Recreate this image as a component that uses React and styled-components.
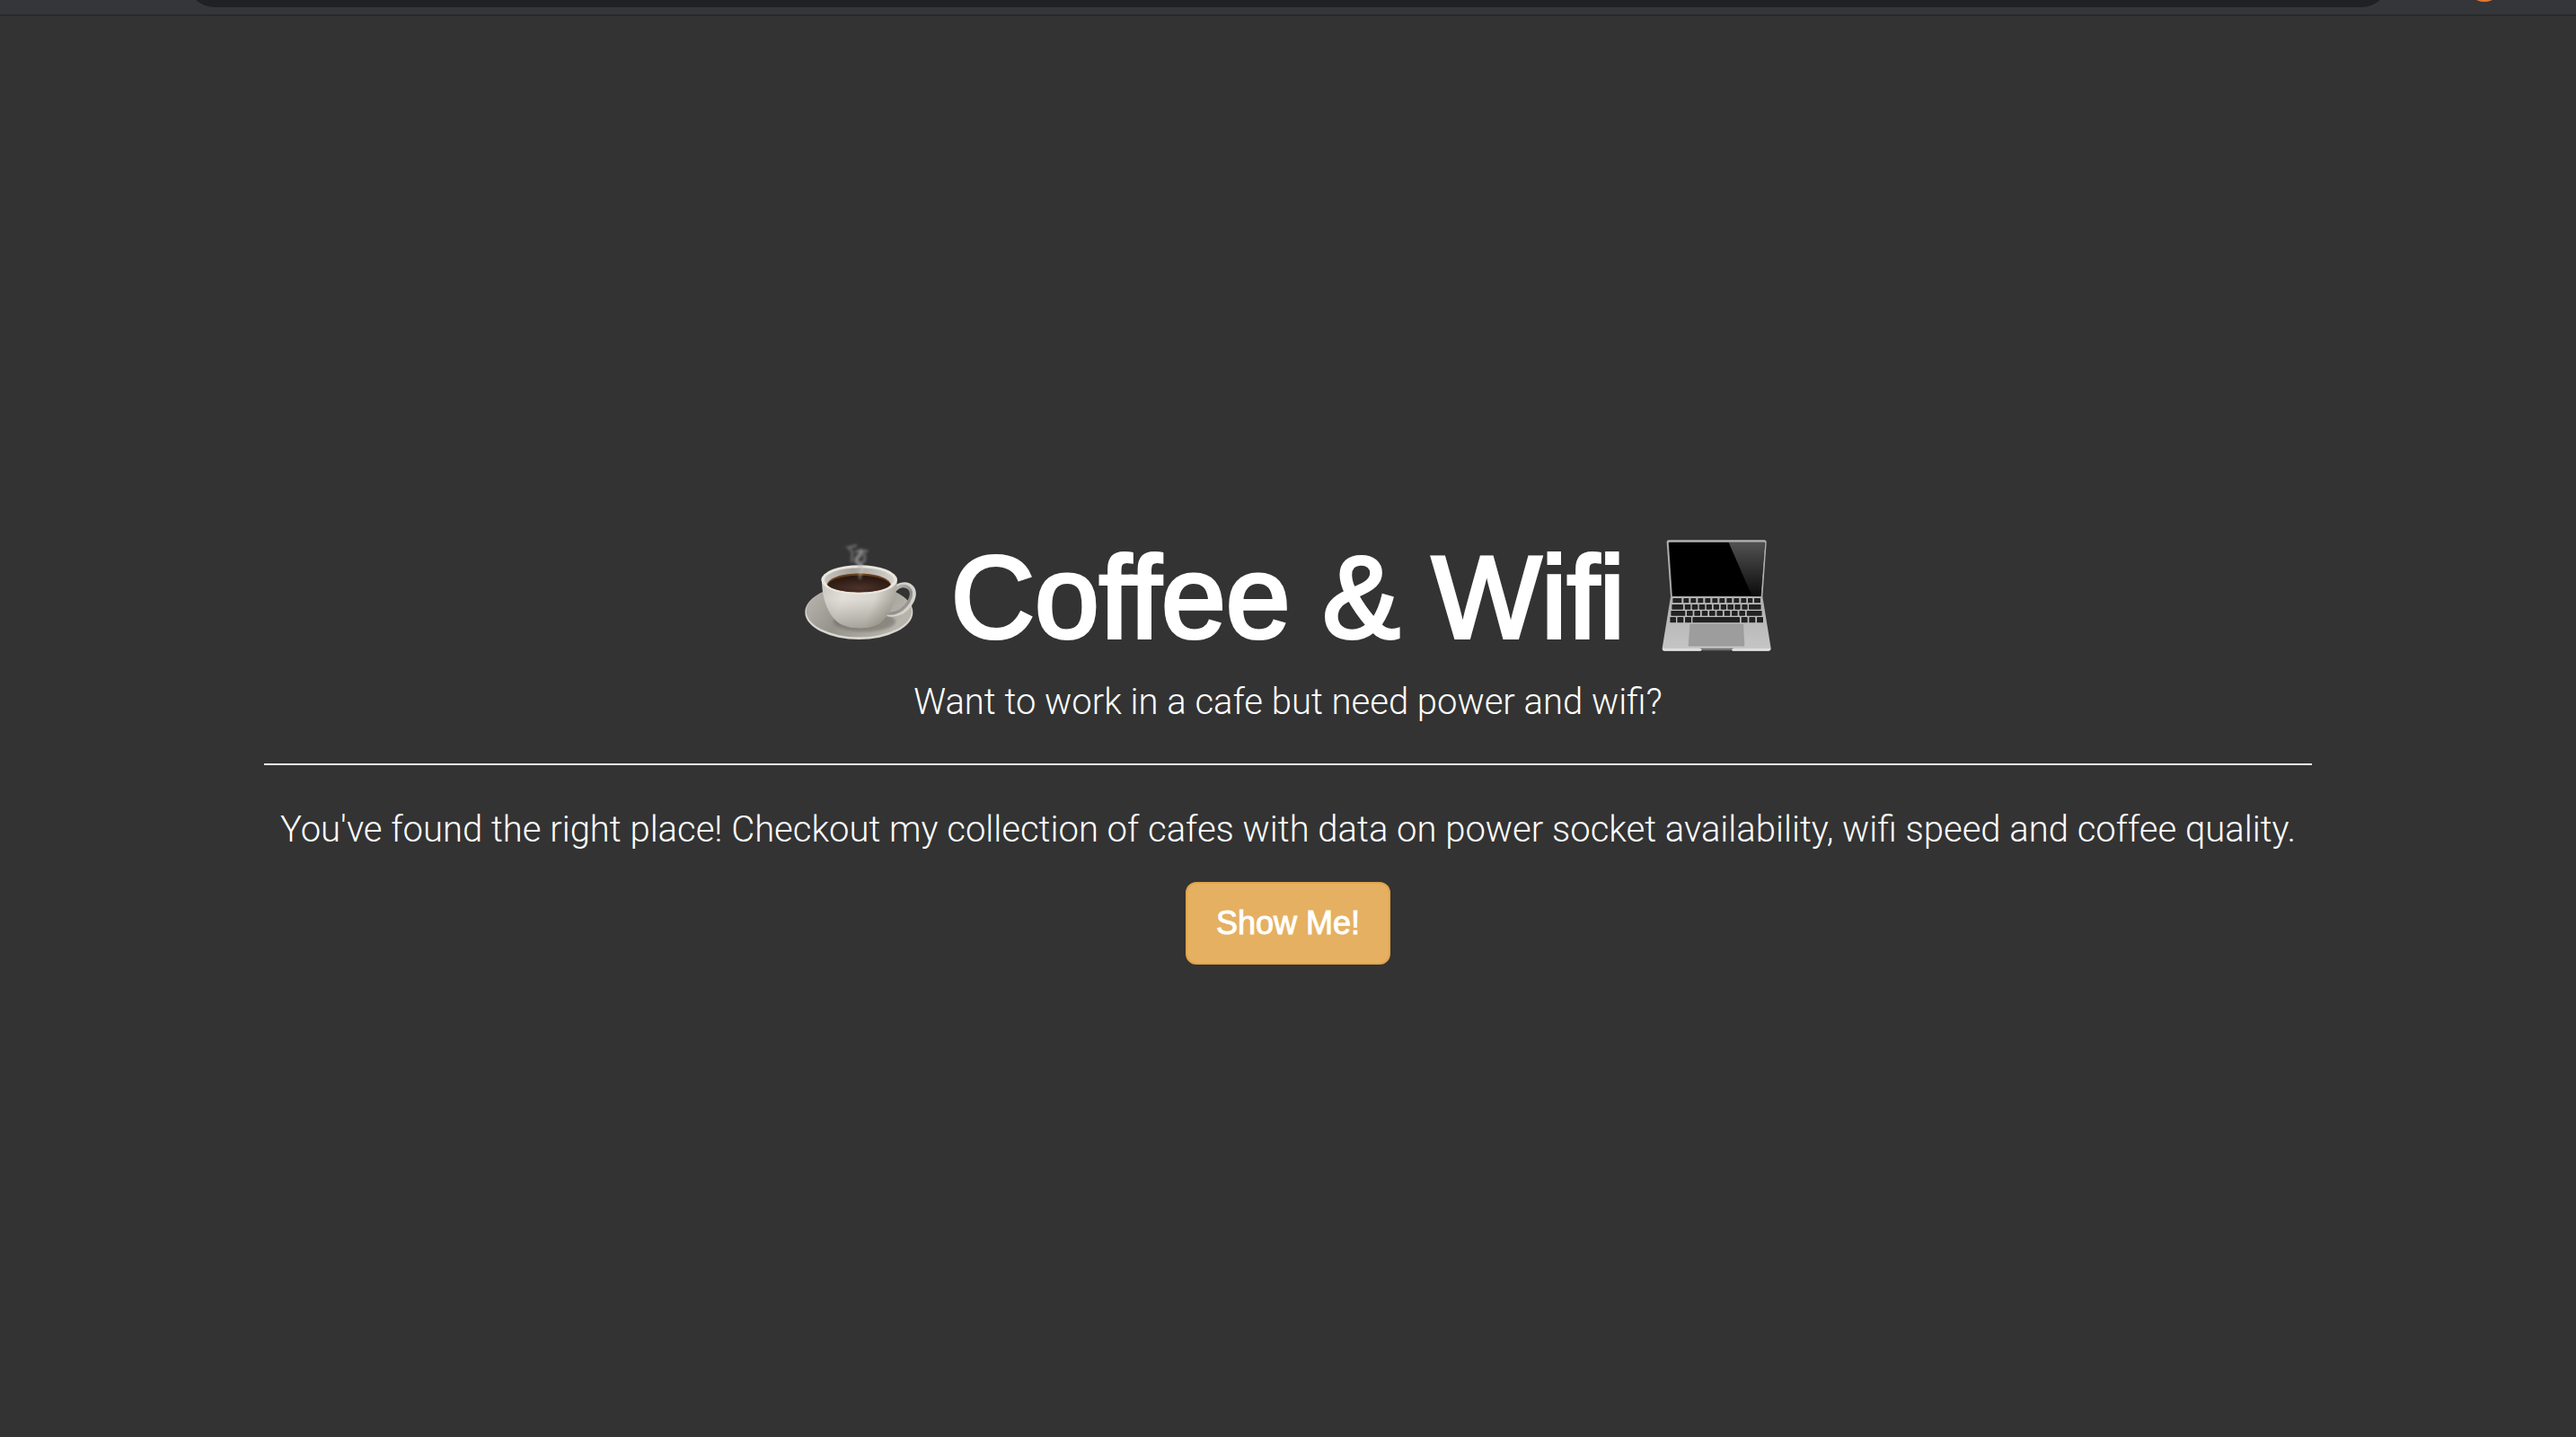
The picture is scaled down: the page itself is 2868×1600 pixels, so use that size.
import React from "react";
import styled, { createGlobalStyle } from "styled-components";

const GlobalStyle = createGlobalStyle`
  *, *::before, *::after { box-sizing: border-box; }
  body {
    margin: 0;
    background: #333333;
    color: #ffffff;
    font-family: "Liberation Sans", Arial, sans-serif;
  }
`;

const Page = styled.div`
  display: flex;
  flex-direction: column;
  min-height: 100vh;
`;

const Toolbar = styled.header`
  display: flex;
  align-items: flex-end;
  gap: 88px;
  height: 18px;
  padding: 0 82px 0 210px;
  overflow: hidden;
  background: #35363a;
  border-bottom: 2px solid #292929;
`;

const AddressBar = styled.input`
  flex: 1;
  min-width: 0;
  height: 56px;
  margin: 0 0 8px;
  padding: 0 28px;
  border: 0;
  border-radius: 28px;
  background: #202124;
  color: #ffffff;
`;

const Avatar = styled.span`
  flex: none;
  width: 40px;
  height: 40px;
  margin-bottom: 14px;
  border-radius: 50%;
  background: #e8772e;
`;

const Hero = styled.main`
  flex: 1;
  display: flex;
  flex-direction: column;
  justify-content: center;
  padding: 50px 30px 0;
`;

const Container = styled.div`
  width: 100%;
  max-width: 2280px;
  margin: 0 auto;
  text-align: center;
`;

const Title = styled.h1`
  display: flex;
  align-items: center;
  justify-content: center;
  gap: 36px;
  margin: 0 0 16px;
  font-size: 129px;
  font-weight: 400;
  line-height: 141px;
  -webkit-text-stroke: 4px #ffffff;
`;

const Emoji = styled.svg`
  flex: none;
  width: 132px;
  height: 132px;
`;

const Lead = styled.p`
  margin: 0 0 28px;
  font-family: Roboto, "Liberation Sans", sans-serif;
  font-size: 40px;
  font-weight: 300;
  line-height: 60px;
`;

const Divider = styled.hr`
  height: 2px;
  margin: 38px 0 42px;
  border: 0;
  background: #eeeeee;
`;

const Button = styled.button`
  padding: 20px 32px;
  border: 2px solid #e2a54b;
  border-radius: 12px;
  background: #e5b061;
  color: #ffffff;
  font-family: inherit;
  font-size: 36px;
  line-height: 48px;
  -webkit-text-stroke: 1px #ffffff;
  cursor: pointer;
`;

function Coffee() {
  return (
    <Emoji viewBox="36 26 396 396" role="img" aria-label="Cup of coffee">
      <defs>
        <linearGradient id="saucer" x1="0" y1="0" x2="1" y2="0.4">
          <stop offset="0" stopColor="#bdbab4" />
          <stop offset="0.5" stopColor="#96938b" />
          <stop offset="1" stopColor="#b7b4ac" />
        </linearGradient>
        <linearGradient id="cup" x1="0" y1="0" x2="1" y2="0.25">
          <stop offset="0" stopColor="#c9c6c0" />
          <stop offset="0.35" stopColor="#e2dfd9" />
          <stop offset="0.75" stopColor="#d8d5ce" />
          <stop offset="1" stopColor="#aaa69d" />
        </linearGradient>
        <linearGradient id="cupShade" x1="0" y1="0" x2="0" y2="1">
          <stop offset="0.4" stopColor="#8b877c" stopOpacity="0" />
          <stop offset="1" stopColor="#7d796f" stopOpacity="0.55" />
        </linearGradient>
        <linearGradient id="inner" x1="0" y1="0" x2="1" y2="0">
          <stop offset="0" stopColor="#c8c5bf" />
          <stop offset="0.4" stopColor="#a5a29c" />
          <stop offset="1" stopColor="#d5d2cc" />
        </linearGradient>
        <radialGradient id="brew" cx="0.5" cy="0.75" r="0.6">
          <stop offset="0" stopColor="#4c332b" />
          <stop offset="1" stopColor="#2c1a13" />
        </radialGradient>
        <linearGradient id="handle" x1="0" y1="0" x2="1" y2="1">
          <stop offset="0" stopColor="#c9c7c2" />
          <stop offset="0.6" stopColor="#8f8d87" />
          <stop offset="1" stopColor="#aaa8a2" />
        </linearGradient>
        <filter id="soft" x="-30%" y="-30%" width="160%" height="160%">
          <feGaussianBlur stdDeviation="4" />
        </filter>
      </defs>
      <ellipse cx="232" cy="274" rx="180" ry="91" fill="#d9d7d1" />
      <ellipse cx="232" cy="270" rx="176" ry="87" fill="url(#saucer)" />
      <ellipse cx="250" cy="305" rx="104" ry="34" fill="#6e6b63" opacity="0.55" filter="url(#soft)" />
      <path d="M352 196C362 180 392 174 408 190C424 207 414 238 394 259C378 276 352 288 326 281" fill="none" stroke="#d4d2cd" strokeWidth="13" strokeLinecap="round" />
      <path d="M356 198C366 184 390 182 401 196C412 210 405 234 388 253C374 269 352 280 330 278" fill="none" stroke="url(#handle)" strokeWidth="10" strokeLinecap="round" />
      <path d="M108 166C108 232 132 291 172 314C206 331 264 331 298 313C336 288 359 232 359 168Z" fill="url(#cup)" />
      <path d="M108 166C108 232 132 291 172 314C206 331 264 331 298 313C336 288 359 232 359 168Z" fill="url(#cupShade)" />
      <ellipse cx="233" cy="166" rx="127" ry="49" fill="#e9e6e0" />
      <ellipse cx="233" cy="166" rx="116" ry="40" fill="url(#inner)" />
      <path d="M125 181C140 132 323 132 339 181C315 216 150 216 125 181Z" fill="#66401c" />
      <path d="M127 183C148 141 318 141 337 183C313 215 150 215 127 183Z" fill="url(#brew)" />
      <g fill="none" strokeLinecap="round" filter="url(#soft)">
        <path d="M236 118C240 110 218 112 224 96C232 82 244 80 238 70" stroke="#a5a5a5" strokeWidth="13" opacity="0.7" />
        <path d="M208 104C206 84 220 74 196 58L222 52" stroke="#8c8c8c" strokeWidth="8" opacity="0.6" />
        <path d="M222 72C236 66 248 68 258 70M240 108C256 104 252 92 250 80" stroke="#999999" strokeWidth="8" opacity="0.6" />
        <path d="M236 160C230 145 250 134 242 118" stroke="#d0cdc8" strokeWidth="7" opacity="0.55" />
      </g>
    </Emoji>
  );
}

const KEY_ROWS = [
  { y: 227, height: 16, keys: [[91, 121], [127, 145], [151, 169], [175, 193], [199, 217], [223, 241], [247, 265], [271, 289], [295, 313], [319, 337], [342, 358], [363, 384]] },
  { y: 248, height: 17, keys: [[88, 126], [131, 151], [155, 175], [179, 199], [203, 222], [227, 246], [251, 270], [274, 294], [298, 317], [322, 341], [345, 386]] },
  { y: 269, height: 17, keys: [[85, 133], [138, 158], [163, 183], [188, 208], [213, 233], [238, 258], [263, 283], [288, 308], [313, 333], [338, 389]] },
  { y: 290, height: 19, keys: [[82, 102], [106, 127], [132, 153], [157, 315], [320, 341], [346, 367], [372, 393]] },
];

function Laptop() {
  return (
    <Emoji viewBox="39 26 396 396" role="img" aria-label="Laptop">
      <defs>
        <linearGradient id="glare" x1="0" y1="0" x2="0" y2="1">
          <stop offset="0" stopColor="#515151" />
          <stop offset="1" stopColor="#0c0c0c" />
        </linearGradient>
        <linearGradient id="deck" x1="0" y1="0" x2="0" y2="1">
          <stop offset="0" stopColor="#aeaeae" />
          <stop offset="1" stopColor="#c6c6c6" />
        </linearGradient>
      </defs>
      <path d="M78 33H398Q404 33 404 41L391 223H84L71 41Q71 33 78 33Z" fill="#b3b3b3" />
      <path d="M80 39H396Q400 39 400 43L387 221H88L76 43Q76 39 80 39Z" fill="#757575" />
      <path d="M81 41H395Q398 41 398 45L385 220H90L78 45Q78 41 81 41Z" fill="#000000" />
      <path d="M278 41H395Q398 41 398 45L385 220H356Z" fill="url(#glare)" />
      <path d="M84 222H391L419 394Q419 403 410 403H292L284 396H192L184 403H64Q55 403 56 394Z" fill="url(#deck)" />
      <path d="M57 395H188L194 400H282L290 395H418Q418 403 410 403H292L284 398H192L184 403H64Q57 403 57 395Z" fill="#dedede" />
      <path d="M182 394H294L284 402H192Z" fill="#747474" />
      <path d="M149 314H326L330 387H144Z" fill="#9d9d9d" stroke="#8b8b8b" strokeWidth="1" />
      {KEY_ROWS.map((row) =>
        row.keys.map(([start, end]) => (
          <rect key={`${row.y}-${start}`} x={start} y={row.y} width={end - start} height={row.height} rx="2" fill="#222222" stroke="#d0d0d0" strokeWidth="2" paintOrder="stroke" />
        ))
      )}
    </Emoji>
  );
}

export default function App() {
  return (
    <Page>
      <GlobalStyle />
      <Toolbar>
        <AddressBar type="text" aria-label="Address" />
        <Avatar />
      </Toolbar>
      <Hero>
        <Container>
          <Title>
            <Coffee />
            <span>Coffee &amp; Wifi</span>
            <Laptop />
          </Title>
          <Lead>Want to work in a cafe but need power and wifi?</Lead>
          <Divider />
          <Lead>
            You've found the right place! Checkout my collection of cafes with data on power socket availability, wifi speed and coffee quality.
          </Lead>
          <Button type="button">Show Me!</Button>
        </Container>
      </Hero>
    </Page>
  );
}
